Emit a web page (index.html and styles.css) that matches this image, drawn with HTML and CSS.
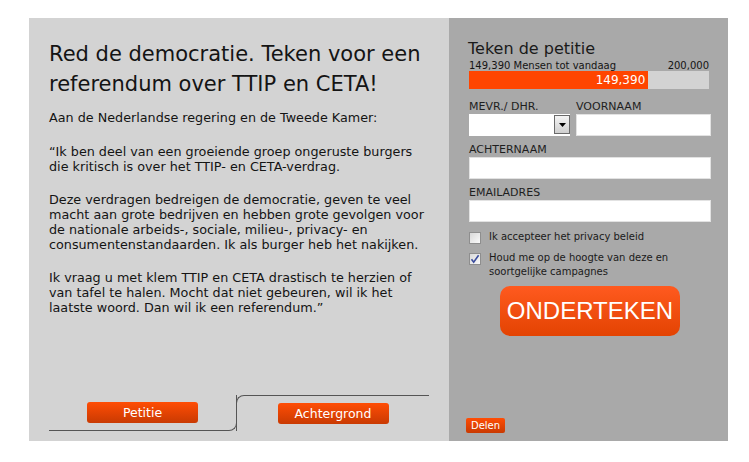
FILE: index.html
```html
<!DOCTYPE html>
<html lang="nl">
<head>
    <meta charset="UTF-8">
    <meta name="viewport" content="width=device-width, initial-scale=1.0">
    <title>Teken de petitie</title>
    <link rel="stylesheet" href="styles.css">
</head>
<body>
    <div class="petition">
        <section class="info">
            <h1>Red de democratie. Teken voor een referendum over TTIP en CETA!</h1>
            <p class="lead">Aan de Nederlandse regering en de Tweede Kamer:</p>
            <p>“Ik ben deel van een groeiende groep ongeruste burgers die kritisch is over het TTIP- en CETA-verdrag.</p>
            <p>Deze verdragen bedreigen de democratie, geven te veel macht aan grote bedrijven en hebben grote gevolgen voor de nationale arbeids-, sociale, milieu-, privacy- en consumentenstandaarden. Ik als burger heb het nakijken.</p>
            <p>Ik vraag u met klem TTIP en CETA drastisch te herzien of van tafel te halen. Mocht dat niet gebeuren, wil ik het laatste woord. Dan wil ik een referendum.”</p>

            <div class="tabs">
                <div class="tab tab-left"><button type="button" class="btn">Petitie</button></div>
                <div class="tab tab-right"><button type="button" class="btn">Achtergrond</button></div>
            </div>
        </section>

        <form class="sign">
            <h2>Teken de petitie</h2>
            <div class="count">
                <span>149,390 Mensen tot vandaag</span>
                <span>200,000</span>
            </div>
            <div class="bar">
                <div class="bar-fill" style="width: 74.7%">149,390</div>
            </div>

            <div class="row">
                <div class="field field-title">
                    <label for="aanhef">MEVR./ DHR.</label>
                    <div class="select">
                        <select id="aanhef"></select>
                        <span class="select-arrow">
                            <svg width="7" height="4" viewBox="0 0 7 4"><path d="M0 0h7L3.5 4z" fill="#000"/></svg>
                        </span>
                    </div>
                </div>
                <div class="field field-grow">
                    <label for="voornaam">VOORNAAM</label>
                    <input type="text" id="voornaam">
                </div>
            </div>
            <div class="field">
                <label for="achternaam">ACHTERNAAM</label>
                <input type="text" id="achternaam">
            </div>
            <div class="field">
                <label for="email">EMAILADRES</label>
                <input type="text" id="email">
            </div>

            <label class="check">
                <span class="box"></span>
                <span>Ik accepteer het privacy beleid</span>
            </label>
            <label class="check check-second">
                <span class="box">
                    <svg width="10" height="10" viewBox="0 0 10 10"><path d="M1.5 5.2l2.2 3L8.6 1.2" fill="none" stroke="#3a4c9c" stroke-width="1.6"/></svg>
                </span>
                <span>Houd me op de hoogte van deze en soortgelijke campagnes</span>
            </label>

            <button type="button" class="sign-btn">ONDERTEKEN</button>
            <button type="button" class="share">Delen</button>
        </form>
    </div>
</body>
</html>
```

FILE: styles.css
```css
body {
    margin: 0;
    background: #fff;
    font-family: "DejaVu Sans", Verdana, sans-serif;
    color: #141414;
}
.petition {
    display: flex;
    margin: 18px 0 0 29px;
    width: 699px;
    height: 423px;
}

/* left column */
.info {
    width: 420px;
    box-sizing: border-box;
    padding: 21px 20px 10px;
    background-color: #d3d3d3;
    display: flex;
    flex-direction: column;
}
.info h1 {
    margin: 0 0 11px;
    font-size: 21px;
    font-weight: normal;
    line-height: 30px;
}
.info p {
    margin: 0 0 18px;
    font-size: 12.75px;
    line-height: 15px;
}
.info p.lead {
    margin-bottom: 19px;
}
.tabs {
    margin-top: auto;
    display: flex;
    height: 36px;
}
.tab {
    display: flex;
    align-items: center;
    justify-content: center;
    box-sizing: border-box;
    border: 0 solid #555;
}
.tab-left {
    width: 188px;
    border-bottom-width: 1px;
    border-right-width: 1px;
    border-bottom-right-radius: 8px;
}
.tab-right {
    width: 193px;
    margin-left: -1px;
    border-top-width: 1px;
    border-left-width: 1px;
    border-top-left-radius: 8px;
}
.btn {
    width: 111px;
    height: 21px;
    padding: 0;
    border: none;
    border-radius: 3px;
    background: linear-gradient(#ff4d05, #c93a02);
    color: #fff;
    font-family: "DejaVu Sans", Verdana, sans-serif;
    font-size: 12.5px;
    cursor: pointer;
}

/* right column */
.sign {
    width: 279px;
    box-sizing: border-box;
    padding: 22px 17px 8px 20px;
    background-color: #a9a9a9;
    display: flex;
    flex-direction: column;
}
.sign h2 {
    margin: 0 0 0 -1px;
    font-size: 16px;
    font-weight: normal;
    line-height: 18px;
    color: #1a1a1a;
}
.count {
    width: 240px;
    margin-top: 2px;
    display: flex;
    justify-content: space-between;
    font-size: 10px;
    line-height: 11px;
}
.bar {
    width: 240px;
    height: 18px;
    background-color: #d3d3d3;
}
.bar-fill {
    height: 100%;
    box-sizing: border-box;
    padding-right: 3px;
    background-color: #ff4500;
    color: #fff;
    font-size: 12px;
    line-height: 18px;
    text-align: right;
}
.row {
    display: flex;
    gap: 6px;
    margin-top: 12px;
}
.field {
    display: flex;
    flex-direction: column;
    margin-top: 8px;
}
.row .field {
    margin-top: 0;
}
.field-title {
    flex: none;
    width: 101px;
}
.field-grow {
    flex: 1;
    min-width: 0;
}
.field label {
    margin-bottom: 1px;
    font-size: 11px;
    line-height: 12px;
    color: #1e1e1e;
}
.field input {
    width: 100%;
    height: 22px;
    box-sizing: border-box;
    border: 1px solid #e2e2e2;
    padding: 2px 4px;
    background: #fff;
    font-size: 12px;
}
.select {
    display: flex;
    height: 22px;
    background: #fff;
}
.select select {
    flex: 1;
    min-width: 0;
    border: none;
    background: transparent;
    appearance: none;
}
.select-arrow {
    width: 16px;
    height: 19px;
    margin: 1px 0 0;
    box-sizing: border-box;
    border: 1px solid #6a6a6a;
    background: linear-gradient(#f4f4f4, #cfcfcf);
    display: flex;
    align-items: center;
    justify-content: center;
}
.check {
    display: flex;
    gap: 8px;
    margin-top: 8px;
    font-size: 10px;
    line-height: 14px;
    color: #1a1a1a;
}
.check-second {
    margin-top: 7px;
}
.box {
    flex: none;
    width: 12px;
    height: 12px;
    margin-top: 2px;
    box-sizing: border-box;
    border: 1px solid #8e8e8e;
    background: linear-gradient(135deg, #d8d8d8, #fafafa);
    display: flex;
    align-items: center;
    justify-content: center;
}
.sign-btn {
    align-self: center;
    width: 180px;
    height: 50px;
    margin-top: 7px;
    border: none;
    border-radius: 10px;
    background: linear-gradient(#ff5a1f, #e34302);
    color: #fff;
    font-family: "Liberation Sans", Arial, sans-serif;
    font-size: 24px;
    cursor: pointer;
}
.share {
    align-self: flex-start;
    margin: auto 0 0 -3px;
    width: 39px;
    height: 15px;
    padding: 0;
    border: none;
    border-radius: 2px;
    background: linear-gradient(#ff4d05, #c93a02);
    color: #fff;
    font-family: "DejaVu Sans", Verdana, sans-serif;
    font-size: 10px;
    cursor: pointer;
}
```
